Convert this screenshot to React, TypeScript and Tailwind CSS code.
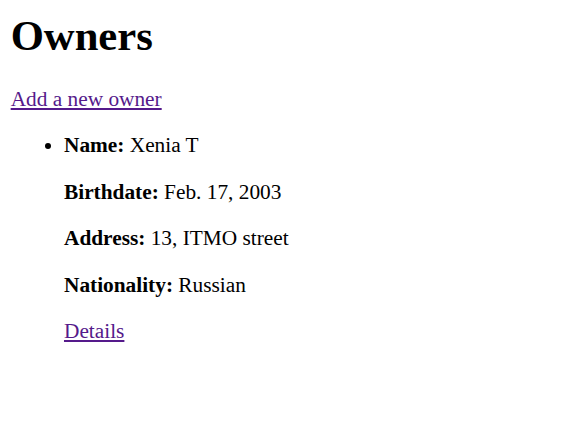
export default function App() {
  const serif = { fontFamily: '"Liberation Serif", "Times New Roman", serif' };
  return (
    <div className="min-h-[427px] bg-white text-black px-[10.67px] pt-[10.67px] text-[21.33px] leading-[25.17px]" style={serif}>
      <h1 className="text-[42.67px] font-bold leading-[49px] m-0">Owners</h1>
      <p className="mt-[27px] mb-0">
        <a href="#" className="text-[#551a8b] underline">Add a new owner</a>
      </p>
      <ul className="list-disc pl-[53.33px] my-[21.33px]">
        <li>
          <p className="my-[21.33px]"><strong>Name:</strong> Xenia T</p>
          <p className="my-[21.33px]"><strong>Birthdate:</strong> Feb. 17, 2003</p>
          <p className="my-[21.33px]"><strong>Address:</strong> 13, ITMO street</p>
          <p className="my-[21.33px]"><strong>Nationality:</strong> Russian</p>
          <p className="my-[21.33px]">
            <a href="#" className="text-[#551a8b] underline">Details</a>
          </p>
        </li>
      </ul>
    </div>
  );
}
